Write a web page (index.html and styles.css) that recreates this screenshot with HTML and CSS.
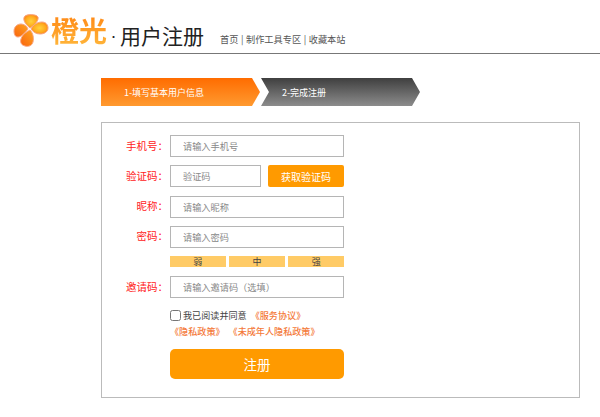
FILE: index.html
```html
<!DOCTYPE html>
<html lang="zh-CN">
<head>
<meta charset="utf-8">
<title>用户注册</title>
<link rel="stylesheet" href="styles.css">
</head>
<body>
<header class="top">
  <svg class="logo" width="36" height="34" viewBox="0 0 36 34">
    <defs>
      <radialGradient id="p" cx="0.5" cy="0.5" r="0.6">
        <stop offset="0" stop-color="#ffd23c"/><stop offset="0.6" stop-color="#ffab1e"/><stop offset="1" stop-color="#fb7a14"/>
      </radialGradient>
      <linearGradient id="q" x1="1" y1="0" x2="0" y2="1">
        <stop offset="0" stop-color="#ffa51e"/><stop offset="1" stop-color="#f9640f"/>
      </linearGradient>
    </defs>
    <g stroke="#f8a684" stroke-width="1">
      <path fill="url(#p)" d="M17 14C12 10 9 5 12 2 15 0 23 0 25 3 26 6 22 11 17 14z"/>
      <path fill="url(#p)" d="M18 15C20 11 24 8 29 8 33 8 35 11 35 14 35 18 31 20 27 20 23 20 20 18 18 15z"/>
      <path fill="url(#q)" d="M17 16C20 19 21 24 20 28 19 32 15 33 12 32 8 31 7 28 8 25 9 21 13 18 17 16z"/>
      <path fill="url(#q)" d="M15 15C12 19 8 23 5 23 2 23 1 20 1 17 1 13 4 10 8 10 11 10 14 12 15 15z"/>
    </g>
  </svg>
  <span class="brand">橙光</span>
  <span class="dot">·</span>
  <h1 class="title">用户注册</h1>
  <nav class="nav">首页 | 制作工具专区 | 收藏本站</nav>
</header>

<main class="page">
  <ol class="steps">
    <li class="step step-on">1-填写基本用户信息</li>
    <li class="step step-off">2-完成注册</li>
  </ol>

  <form class="panel">
    <div class="row">
      <label class="label">手机号：</label>
      <input class="field" placeholder="请输入手机号">
    </div>
    <div class="row">
      <label class="label">验证码：</label>
      <input class="field field-code" placeholder="验证码">
      <button class="send" type="button">获取验证码</button>
    </div>
    <div class="row">
      <label class="label">昵称：</label>
      <input class="field" placeholder="请输入昵称">
    </div>
    <div class="row">
      <label class="label">密码：</label>
      <input class="field" placeholder="请输入密码">
    </div>
    <div class="strength">
      <span class="bar">弱</span><span class="bar">中</span><span class="bar">强</span>
    </div>
    <div class="row row-invite">
      <label class="label">邀请码：</label>
      <input class="field" placeholder="请输入邀请码（选填）">
    </div>
    <div class="agree">
      <div class="agree-line">
        <input class="check" type="checkbox">
        <span>我已阅读并同意</span>
        <a class="link link-first">《服务协议》</a>
      </div>
      <div class="agree-line agree-links">
        <a class="link">《隐私政策》</a>
        <a class="link">《未成年人隐私政策》</a>
      </div>
    </div>
    <button class="submit" type="button">注册</button>
  </form>
</main>
</body>
</html>
```
FILE: styles.css
```css
* { box-sizing: border-box; }
html, body { margin: 0; padding: 0; }
body {
  width: 600px;
  height: 417px;
  overflow: hidden;
  background: #fff;
  font-family: "Noto Sans CJK SC", "Noto Sans", sans-serif;
  color: #444;
}
.top {
  height: 54px;
  border-bottom: 1px solid #777;
  display: flex;
  align-items: flex-start;
  padding: 14px 0 0 13px;
}
.logo { flex: none; }
.brand {
  margin: -2px 0 0 2px;
  font-size: 28px;
  line-height: 36px;
  font-weight: 700;
  background: linear-gradient(#ff8412, #ffb83c);
  -webkit-background-clip: text;
  background-clip: text;
  color: transparent;
}
.dot { margin: 9px 0 0 0; width: 13px; font-size: 10px; line-height: 28px; color: #222; text-align: center; }
.title {
  margin: 6px 0 0 0;
  font-size: 21px;
  line-height: 30px;
  font-weight: 400;
  color: #222;
}
.nav {
  margin: 16px 0 0 16px;
  font-size: 9.2px;
  line-height: 18px;
  color: #555;
  white-space: pre;
  word-spacing: 0.5px;
}
.page { padding: 24px 0 0 101px; }
.steps { display: flex; gap: 1px; list-style: none; margin: 0; padding: 0; }
.step {
  width: 159px;
  height: 28px;
  font-size: 9px;
  line-height: 29px;
  color: #fff;
}
.step-on {
  padding-left: 23px;
  background: linear-gradient(#ff6c00, #ff9a30);
  clip-path: polygon(0 0, 151px 0, 100% 50%, 151px 100%, 0 100%);
}
.step-off {
  padding-left: 21px;
  background: linear-gradient(#3f3f3f, #8c8c8c);
  clip-path: polygon(0 0, 151px 0, 100% 50%, 151px 100%, 0 100%, 8px 50%);
}
.panel {
  width: 479px;
  height: 276px;
  margin-top: 16px;
  border: 1px solid #bbb;
  padding: 12px 0 0 68px;
  position: relative;
}
.row { display: flex; align-items: center; height: 22px; margin-bottom: 8.3px; }
.label {
  width: 60px;
  text-align: right;
  font-size: 10.5px;
  line-height: 21px;
  color: #f22;
  flex: none;
  padding-right: 2px;
  margin-left: -60px;
  margin-top: -2px;
}
.field {
  width: 174px;
  height: 22px;
  border: 1px solid #b5b5b5;
  background: #fff;
  padding: 0 0 0 12px;
  font: 9.2px "Noto Sans CJK SC", sans-serif;
  outline: 0;
}
.field::placeholder { color: #888; opacity: 1; }
.field-code { width: 91px; }
.send {
  width: 76px;
  height: 22px;
  margin-left: 7px;
  border: 0;
  border-radius: 2px;
  background: #ff9a00;
  color: #fff;
  padding: 0;
  font: 10px "Noto Sans CJK SC", sans-serif;
}
.strength { display: flex; gap: 3.5px; width: 174px; margin-top: 0; }
.bar {
  flex: 1;
  height: 11px;
  background: #ffcb66;
  text-align: center;
  font-size: 9px;
  line-height: 12px;
  color: #444;
}
.row-invite { margin-top: 9px; margin-bottom: 0; }
.agree { margin-top: 9px; font-size: 9.1px; color: #444; }
.agree-line { display: flex; align-items: center; height: 16px; }
.agree-links { margin-top: 0; height: 16px; }
.check {
  width: 11px;
  height: 11px;
  margin: 0 2px 0 0;
  flex: none;
}
.link { color: #f47a3a; font-weight: 500; white-space: pre; }
.link-first { margin-left: 4px; }
.agree-links .link + .link { margin-left: 4px; }
.submit {
  display: block;
  width: 174px;
  height: 30px;
  margin-top: 10px;
  border: 0;
  border-radius: 5px;
  background: #ff9a00;
  color: #fff;
  padding: 0;
  font: 13.5px "Noto Sans CJK SC", sans-serif;
}
```
